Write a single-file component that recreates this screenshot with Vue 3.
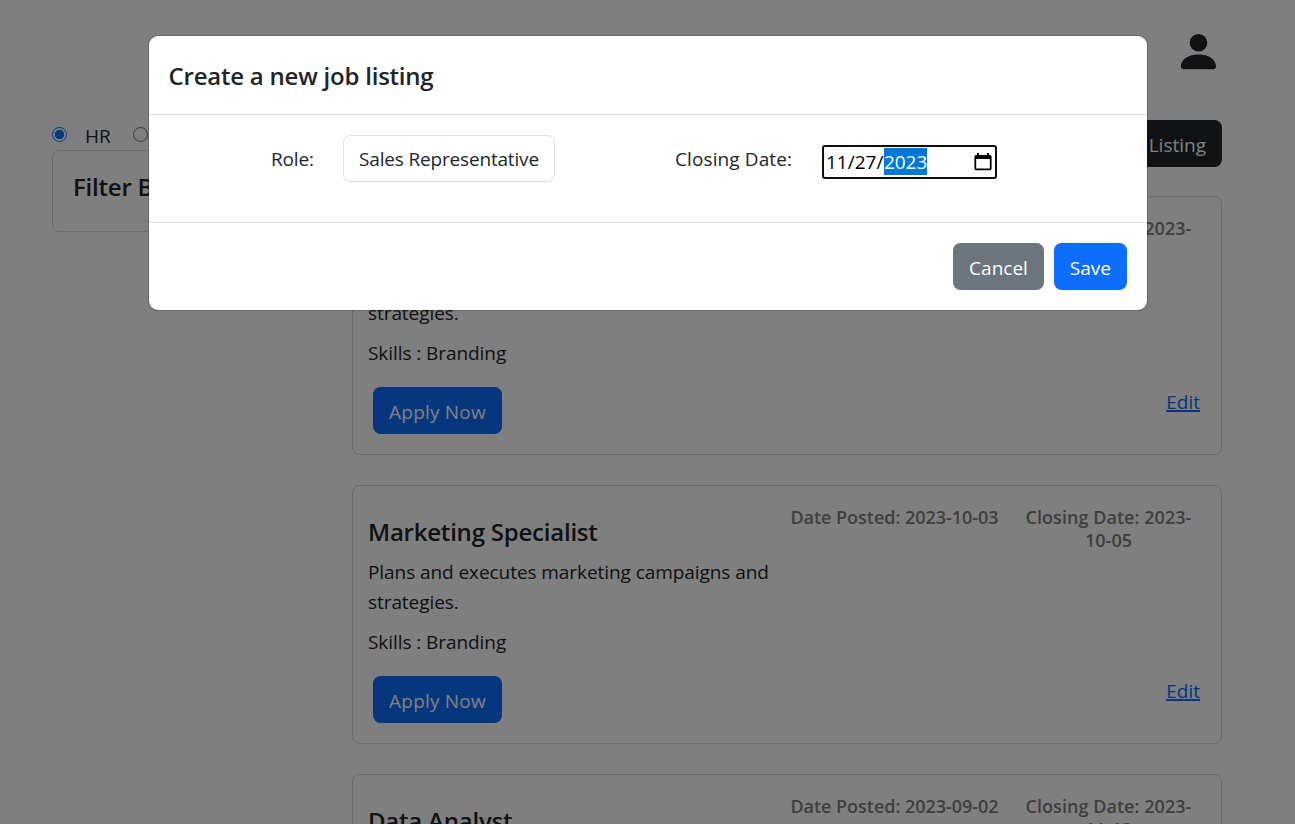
<script setup>
import { ref } from 'vue'

const department = ref('HR')
const jobs = [
  { title: 'Marketing Specialist', text: 'Plans and executes marketing campaigns and strategies.', skills: 'Branding', posted: '2023-10-03', closing: '2023-10-05' },
  { title: 'Marketing Specialist', text: 'Plans and executes marketing campaigns and strategies.', skills: 'Branding', posted: '2023-10-03', closing: '2023-10-05' },
  { title: 'Data Analyst', text: '', skills: '', posted: '2023-09-02', closing: '2023-11-13' },
]
</script>

<template>
  <div class="page">
    <header class="topbar">
      <svg class="user" viewBox="0 0 16 16" fill="currentColor">
        <path d="M3 14s-1 0-1-1 1-4 6-4 6 3 6 4-1 1-1 1zm5-6a3 3 0 1 0 0-6 3 3 0 0 0 0 6" />
      </svg>
    </header>

    <main class="main">
      <aside class="side">
        <div class="radios">
          <span class="radio" :class="{ on: department === 'HR' }"></span>
          <span class="radio-label">HR</span>
          <span class="radio"></span>
        </div>
        <div class="filter"><h5 class="heading">Filter By</h5></div>
      </aside>

      <section class="list">
        <div class="actions"><button class="btn dark">Add Listing</button></div>
        <article v-for="(job, i) in jobs" :key="i" class="card">
          <div class="info">
            <h5 class="heading">{{ job.title }}</h5>
            <template v-if="job.text">
              <p class="desc">{{ job.text }}</p>
              <p class="skills">Skills : {{ job.skills }}</p>
              <button class="btn primary">Apply Now</button>
            </template>
          </div>
          <h6 class="date posted">Date Posted: {{ job.posted }}</h6>
          <div class="closing">
            <h6 class="date">Closing Date: {{ job.closing }}</h6>
            <a v-if="job.text" class="edit">Edit</a>
          </div>
        </article>
      </section>
    </main>

    <div class="backdrop">
      <div class="modal">
        <div class="modal-head"><h5 class="heading">Create a new job listing</h5></div>
        <div class="modal-body">
          <span class="label role">Role:</span>
          <div class="select">Sales Representative</div>
          <span class="label closing-label">Closing Date:</span>
          <div class="date-input">
            <span class="value">11/27/<span class="selected">2023</span></span>
            <svg class="calendar" viewBox="0 0 18 20">
              <path fill="#000" fill-rule="evenodd" d="M3 1h2v2h8V1h2v2h1a1.6 1.6 0 0 1 1.6 1.6v12A1.6 1.6 0 0 1 16 18.2H2A1.6 1.6 0 0 1 .4 16.6v-12A1.6 1.6 0 0 1 2 3h1zM2.2 7v9.5h13.6v-9.5z" />
            </svg>
          </div>
        </div>
        <div class="modal-foot">
          <button class="btn secondary">Cancel</button>
          <button class="btn primary">Save</button>
        </div>
      </div>
    </div>
  </div>
</template>

<style>
body { margin: 0; overflow: hidden; }
</style>

<style scoped>
* { box-sizing: border-box; }
.page {
  height: 824px; overflow: hidden; position: relative; background: #fff; color: #212529;
  font-family: "Segoe UI", "Open Sans", "Noto Sans", sans-serif; font-size: 19px; line-height: 30px;
}
h5, h6, p { margin: 0; }
.heading { font-size: 24px; font-weight: 600; line-height: 30px; letter-spacing: -.22px; }
.topbar { height: 120px; display: flex; justify-content: flex-end; padding: 28px 73px 0 0; }
.user { width: 47px; height: 47px; }
.main { display: flex; gap: 30px; padding: 0 73px 0 52px; }
.side { width: 270px; }
.radios { display: flex; height: 30px; align-items: center; }
.radio { width: 15px; height: 15px; margin-bottom: 2px; border: 1.5px solid #767676; border-radius: 50%; }
.radio.on { border: 1.5px solid #0075ff; background: radial-gradient(circle, #0075ff 4.5px, #fff 5px); }
.radio-label { width: 48px; margin: 0 0 0 18px; padding-top: 2px; }
.filter { height: 82px; border: 1px solid #d3d3d3; border-radius: 7.5px; padding: 21px 20px; }
.list { flex: 1; }
.actions { display: flex; justify-content: flex-end; margin-bottom: 29px; }
.btn {
  height: 47px; border: 0; border-radius: 7.5px; padding: 2px 16px 0; color: #fff;
  font: inherit; line-height: 30px; white-space: nowrap;
}
.dark { background: #212529; }
.primary { background: #0d6efd; }
.secondary { background: #6c757d; }
.card {
  height: 259px; margin-bottom: 30px; border: 1px solid #d3d3d3; border-radius: 7.5px;
  display: grid; grid-template-columns: 419px 215px 1fr; padding: 0 21px 0 15px;
}
.info { padding-top: 31px; }
.desc, .skills { margin-top: 10px; letter-spacing: -.07px; }
.info .btn { display: block; margin: 19px 0 0 5px; letter-spacing: .2px; width: 129px; }
.date { font-size: 18px; line-height: 23px; font-weight: 600; color: #7f7f7f; text-align: center; white-space: nowrap; margin-top: 20px; letter-spacing: -.03px; }
.closing { display: flex; flex-direction: column; }
.closing .date { white-space: normal; width: 183px; margin-left: 15px; letter-spacing: .05px; }
.edit { align-self: flex-end; margin-top: 124px; color: #0d6efd; text-decoration: underline; text-decoration-thickness: 1.5px; }
.backdrop { position: absolute; inset: 0; background: rgba(0, 0, 0, .5); display: flex; justify-content: center; align-items: flex-start; padding-top: 35px; }
.modal { width: 1000px; margin-left: 1px; background: #fff; background-clip: padding-box; border: 1px solid rgba(0, 0, 0, .175); border-radius: 10px; }
.modal-head { height: 79px; padding: 25px 19px 0 19.5px; border-bottom: 1px solid #dee2e6; }
.modal-body { height: 107px; padding: 20px 0 0 122px; display: flex; align-items: flex-start; }
.label { margin-top: 9px; white-space: nowrap; }
.role { width: 72px; letter-spacing: -.15px; }
.select { width: 212px; height: 47px; border: 1px solid #dee2e6; border-radius: 7.5px; padding: 8px 15px; white-space: nowrap; letter-spacing: -.17px; }
.closing-label { width: 147px; margin-left: 120px; letter-spacing: .1px; }
.date-input { width: 175px; height: 34px; margin-top: 10px; border: 2px solid #101010; border-radius: 3px; display: flex; align-items: center; justify-content: space-between; padding: 0 3px 0 2px; color: #000; }
.value { line-height: 29px; white-space: nowrap; margin-top: 1px; }
.selected { display: inline-block; height: 27px; line-height: 29px; vertical-align: top; background: #0078d7; color: #fff; margin-left: .5px; }
.calendar { width: 18px; height: 20px; }
.modal-foot { height: 88px; border-top: 1px solid #dee2e6; padding: 20px 20px 20px 19px; display: flex; justify-content: flex-end; gap: 10px; }
</style>
